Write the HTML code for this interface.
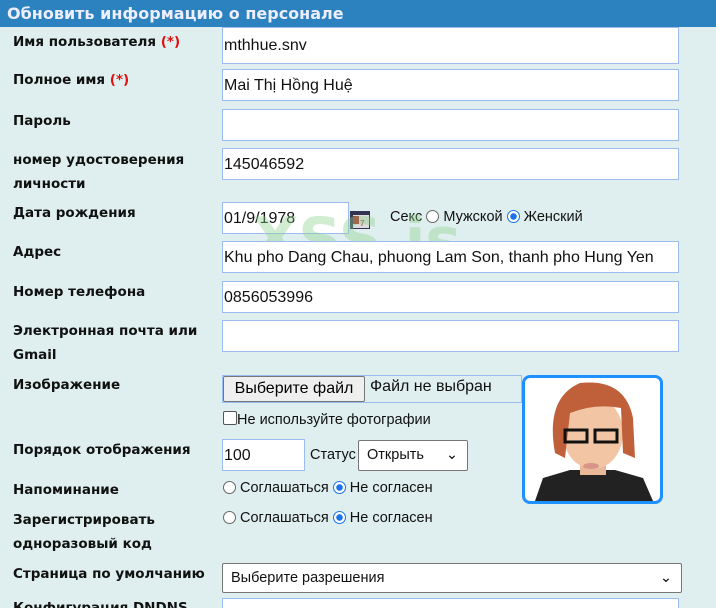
<!DOCTYPE html>
<html><head><meta charset="utf-8"><style>
html,body{margin:0;width:716px;height:608px;overflow:hidden}
body{background:#dfeeee;font-family:"Liberation Sans",sans-serif;position:relative}
.hdr{position:absolute;left:0;top:0;width:716px;height:27px;background:#2b82be;color:#eef;font-weight:bold;font-size:16px;font-family:"DejaVu Sans",sans-serif;line-height:27px;padding-left:7px;box-sizing:border-box}
.l{position:absolute;left:13px;font-weight:bold;font-size:13.5px;color:#111;line-height:24px;font-family:"DejaVu Sans",sans-serif}
.r{color:#e01010}
.i{position:absolute;left:222px;width:457px;height:32px;background:#fff;border:1px solid #9cbcf0;box-sizing:border-box;font-size:16px;line-height:32px;padding-left:1px;color:#111}
.t{position:absolute;font-size:14.5px;color:#111}
.rad{display:inline-block;width:13px;height:13px;border:1px solid #666;border-radius:50%;vertical-align:-2px;background:#fff;margin-right:4px;box-sizing:border-box}
.on{border:1px solid #1a73e8;background:radial-gradient(#1a73e8 0 3px,#fff 3.5px)}
.sel{position:absolute;background:#fff;border:1px solid #777;border-radius:2px;box-sizing:border-box;font-size:14.5px;padding-left:8px;color:#111}
.ar{position:absolute;right:9px;top:0}
</style></head><body>
<div class="hdr">Обновить информацию о персонале</div>
<div class="l" style="top:30px">Имя пользователя <span class="r">(*)</span></div>
<div class="i" style="top:27px;height:37px;line-height:36px">mthhue.snv</div>
<div class="l" style="top:68px">Полное имя <span class="r">(*)</span></div>
<div class="i" style="top:69px">Mai Thị Hồng Huệ</div>
<div class="l" style="top:109px">Пароль</div>
<div class="i" style="top:109px"></div>
<div class="l" style="top:148px">номер удостоверения<br>личности</div>
<div class="i" style="top:148px">145046592</div>
<div class="l" style="top:201px">Дата рождения</div>
<div class="i" style="top:202px;width:127px">01/9/1978</div>
<svg style="position:absolute;left:350px;top:210px" width="21" height="20"><rect x="0" y="1" width="20" height="18" fill="#335"/><rect x="3" y="5" width="16" height="13" fill="#ddd"/><rect x="3" y="6" width="6" height="8" fill="#a22"/><text x="10" y="16" font-size="8" fill="#a22">7</text></svg>
<div class="t" style="left:390px;top:209px">Секс <span class="rad"></span>Мужской <span class="rad on"></span>Женский</div>
<div style="position:absolute;left:252px;top:205px;font-size:60px;font-weight:bold;font-family:'DejaVu Sans',sans-serif;color:rgba(140,210,140,0.4)">XSS.is</div>
<div class="l" style="top:240px">Адрес</div>
<div class="i" style="top:241px">Khu pho Dang Chau, phuong Lam Son, thanh pho Hung Yen</div>
<div class="l" style="top:280px">Номер телефона</div>
<div class="i" style="top:281px">0856053996</div>
<div class="l" style="top:319px">Электронная почта или<br>Gmail</div>
<div class="i" style="top:320px"></div>
<div class="l" style="top:373px">Изображение</div>
<div style="position:absolute;left:222px;top:375px;width:300px;height:28px;border:1px solid #9cbcf0;box-sizing:border-box;background:#dfeeee"></div>
<div style="position:absolute;left:223px;top:376px;width:142px;height:26px;border:1px solid #777;background:#efefef;box-sizing:border-box;font-size:16px;line-height:24px;text-align:center;border-radius:2px">Выберите файл</div>
<div class="t" style="left:370px;top:378px;font-size:16px">Файл не выбран</div>
<div class="t" style="left:223px;top:411px"><span style="display:inline-block;width:12px;height:12px;border:1px solid #555;border-radius:2px;background:#fff;vertical-align:-1px"></span>Не используйте фотографии</div>
<div class="l" style="top:438px">Порядок отображения</div>
<div class="i" style="top:439px;width:83px">100</div>
<div class="t" style="left:310px;top:447px">Статус</div>
<div class="sel" style="left:358px;top:440px;width:110px;height:31px;line-height:29px">Открыть<span class="ar">⌄</span></div>
<div class="l" style="top:478px">Напоминание</div>
<div class="t" style="left:223px;top:480px"><span class="rad"></span>Соглашаться <span class="rad on"></span>Не согласен</div>
<div class="l" style="top:508px">Зарегистрировать<br>одноразовый код</div>
<div class="t" style="left:223px;top:510px"><span class="rad"></span>Соглашаться <span class="rad on"></span>Не согласен</div>
<div class="l" style="top:562px">Страница по умолчанию</div>
<div class="sel" style="left:222px;top:563px;width:460px;height:30px;line-height:28px">Выберите разрешения<span class="ar">⌄</span></div>
<div class="l" style="top:596px">Конфигурация DNDNS</div>
<div class="i" style="top:598px"></div>
<div style="position:absolute;left:522px;top:375px;width:141px;height:129px;border:3px solid #1e90ff;border-radius:8px;background:#fff;box-sizing:border-box;overflow:hidden">
<svg width="135" height="123"><path d="M10 123 L18 100 L45 92 L90 92 L118 100 L128 123Z" fill="#222"/><rect x="55" y="75" width="26" height="22" fill="#e8b898"/><ellipse cx="68" cy="55" rx="30" ry="36" fill="#f2c6a4"/><path d="M30 75 Q20 20 55 5 Q100 0 108 40 L110 80 L98 75 L96 30 Q70 25 45 35 L40 80Z" fill="#c0603a"/><rect x="40" y="52" width="22" height="12" fill="none" stroke="#111" stroke-width="3"/><rect x="70" y="52" width="22" height="12" fill="none" stroke="#111" stroke-width="3"/><ellipse cx="66" cy="88" rx="8" ry="3" fill="#d9948a"/></svg></div>
</body></html>
